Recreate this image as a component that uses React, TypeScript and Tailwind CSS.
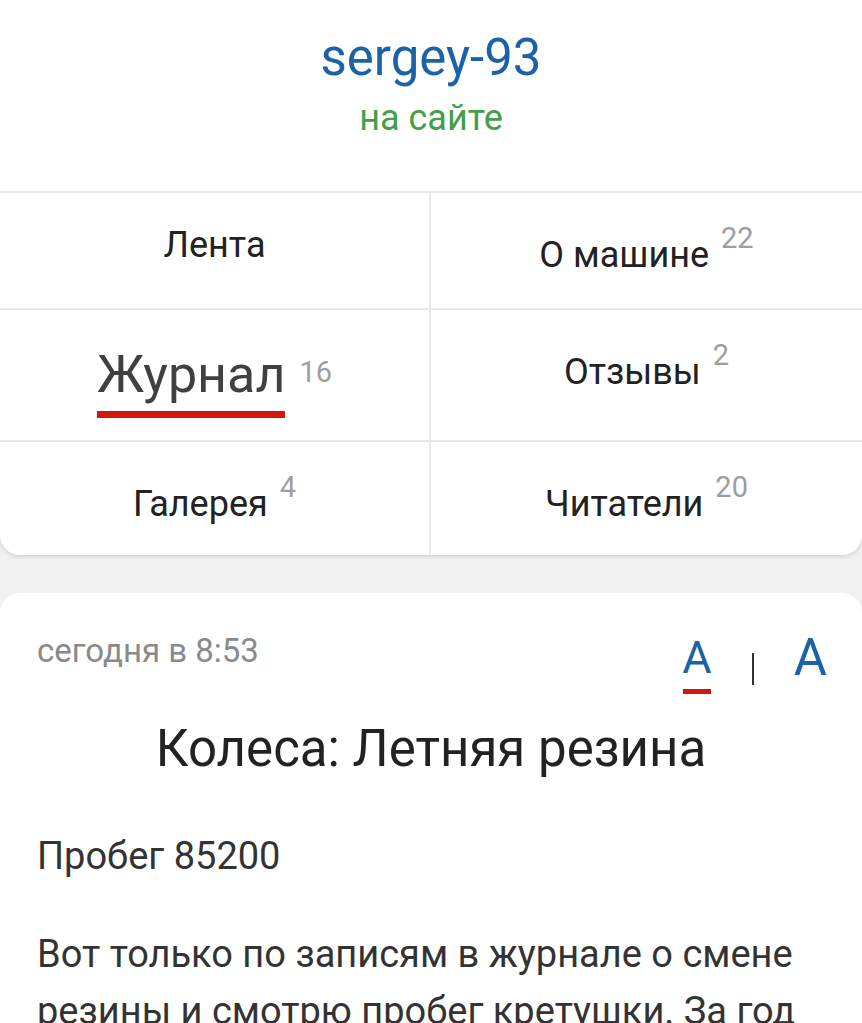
import React from 'react';

type Tab = { label: string; count?: number; active?: boolean };

const rows: Tab[][] = [
  [{ label: 'Лента' }, { label: 'О машине', count: 22 }],
  [{ label: 'Журнал', count: 16, active: true }, { label: 'Отзывы', count: 2 }],
  [{ label: 'Галерея', count: 4 }, { label: 'Читатели', count: 20 }],
];

function TabCell({ tab }: { tab: Tab }) {
  if (tab.active) {
    return (
      <div className="flex items-start justify-center pt-[34px]">
        <div className="flex items-start">
          <div className="flex flex-col">
            <span className="text-[52px] leading-[62px] text-[#404040]">{tab.label}</span>
            <span className="mt-[5px] h-[7px] bg-[#d2180c]" />
          </div>
          <span className="ml-[14px] mt-[11px] text-[29px] leading-[34px] text-[#9e9e9e]">{tab.count}</span>
        </div>
      </div>
    );
  }
  return (
    <div className="flex items-start justify-center pt-[30px]">
      <span className={`text-[36px] leading-[44px] text-[#222] ${tab.count !== undefined ? 'mt-[10px]' : ''}`}>
        {tab.label}
      </span>
      {tab.count !== undefined && (
        <span className="ml-[12px] -mt-[2px] text-[29px] leading-[34px] text-[#9e9e9e]">{tab.count}</span>
      )}
    </div>
  );
}

export default function App() {
  return (
    <div className="min-h-screen bg-[#f1f1f1] font-['Roboto',sans-serif]">
      <div className="rounded-b-[20px] bg-white shadow-[0_2px_4px_rgba(0,0,0,0.12)]">
        <div className="flex h-[191px] flex-col items-center pt-[28px]">
          <div className="text-[51px] leading-[60px] text-[#1c62a8]">sergey-93</div>
          <div className="mt-[8px] text-[36px] leading-[44px] text-[#43a046]">на сайте</div>
        </div>
        <div className="border-t-2 border-[#e8e8e8]">
          {rows.map((row, i) => (
            <div
              key={i}
              className={`grid grid-cols-[429px_2px_1fr] ${i < 2 ? 'border-b-2 border-[#e8e8e8]' : ''} ${
                i === 1 ? 'h-[132px]' : i === 0 ? 'h-[117px]' : 'h-[113px]'
              }`}
            >
              <TabCell tab={row[0]} />
              <div className="bg-[#e8e8e8]" />
              <TabCell tab={row[1]} />
            </div>
          ))}
        </div>
      </div>

      <div className="mt-[38px] rounded-t-[20px] bg-white px-[37px] pt-[38px]">
        <div className="flex items-start justify-between">
          <span className="text-[33px] leading-[40px] text-[#8a8a8a]">сегодня в 8:53</span>
          <div className="-mr-[2px] mt-[2px] flex items-start">
            <div className="flex flex-col items-center">
              <span className="text-[45px] leading-[50px] text-[#1c62a8]">A</span>
              <span className="mt-[6px] h-[5px] w-[28px] bg-[#d2180c]" />
            </div>
            <span className="mx-[40px] mt-[20px] h-[32px] w-[2px] bg-[#333]" />
            <span className="-mt-[3px] text-[51px] leading-[56px] text-[#1c62a8]">A</span>
          </div>
        </div>
        <h1 className="mt-[24px] text-center text-[51px] leading-[62px] text-[#222]">Колеса: Летняя резина</h1>
        <p className="mt-[52px] text-[38px] leading-[48px] text-[#333]">Пробег 85200</p>
        <p className="mt-[46px] text-[38px] leading-[57px] text-[#333]">
          Вот только по записям в журнале о смене резины и смотрю пробег кретушки. За год
        </p>
      </div>
    </div>
  );
}
